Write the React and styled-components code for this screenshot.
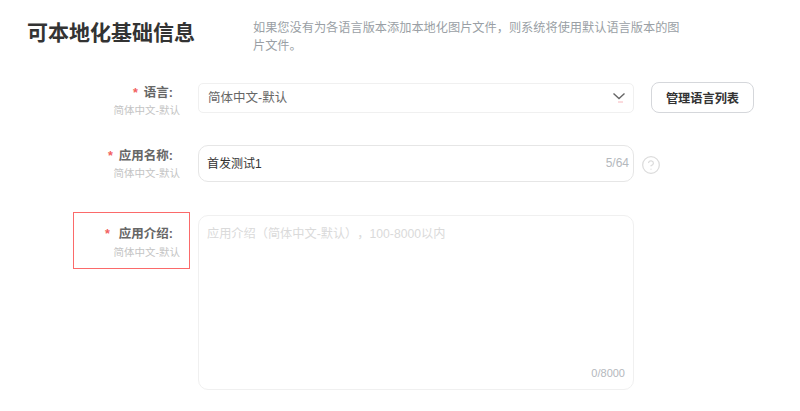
import React from 'react'
import styled, { createGlobalStyle } from 'styled-components'
import { CircleHelp } from 'lucide-react'

const GlobalStyle = createGlobalStyle`
    html, body {
        margin: 0;
        padding: 0;
        background: #fff;
        overflow: hidden;
    }
    * {
        box-sizing: border-box;
    }
    body, input, textarea, button {
        font-family: "Liberation Sans", "Noto Sans CJK SC", sans-serif;
    }
`

const Page = styled.div`
    width: 800px;
    height: 411px;
    padding: 18px 0 0 27px;
    overflow: hidden;
`

const Header = styled.header`
    display: flex;
    align-items: flex-start;
    height: 64px;
`

const Title = styled.h1`
    width: 226px;
    margin: 0;
    font-size: 21px;
    line-height: 30px;
    font-weight: 700;
    color: #333;
`

const Description = styled.p`
    width: 432px;
    margin: 1px 0 0;
    font-size: 12.2px;
    line-height: 18px;
    color: #9a9fa5;
`

const Form = styled.form`
    display: flex;
    flex-direction: column;
    margin-left: 46px;
`

const Row = styled.div`
    display: flex;
    align-items: flex-start;
    margin-bottom: ${(p) => p.$gap || 0}px;
`

const LabelCell = styled.div`
    width: 117px;
    height: 40px;
    margin-right: 8px;
    padding: 1px 9px 0 0;
    border: 1px solid transparent;
    text-align: right;
`

const FlaggedLabelCell = styled(LabelCell)`
    height: 57px;
    padding-top: 12px;
    border-color: rgb(251, 106, 106);
`

const LabelText = styled.div`
    padding-right: 7px;
    font-size: 12.5px;
    line-height: 18px;
    font-weight: 700;
    color: #666;
`

const Star = styled.span`
    margin-right: ${(p) => p.$gap || 6}px;
    color: #f25f5f;
`

const LabelHint = styled.div`
    font-size: 10.5px;
    line-height: 16px;
    color: #c4c4c4;
`

const FlaggedHint = styled(LabelHint)`
    margin-top: 1px;
`

const FieldWrap = styled.div`
    position: relative;
    width: 436px;
    margin-top: ${(p) => p.$top || 0}px;
`

const SelectBox = styled.div`
    display: flex;
    align-items: center;
    justify-content: space-between;
    height: 30px;
    padding: 0 7px 3px 9px;
    border: 1px solid #f0f0f0;
    border-radius: 5px;
    font-size: 12.5px;
    color: #666;
`

const TextInput = styled.input`
    display: block;
    width: 100%;
    height: 37px;
    padding: 0 50px 2px 8px;
    border: 1px solid #e6e6e6;
    border-radius: 10px;
    outline: none;
    font-size: 12px;
    color: #333;
`

const TextArea = styled.textarea`
    display: block;
    width: 100%;
    height: 175px;
    padding: 9px 8px;
    border: 1px solid #f0f0f0;
    border-radius: 10px;
    outline: none;
    resize: none;
    font-size: 12.2px;
    line-height: 18px;
    text-spacing-trim: space-all;
    &::placeholder {
        color: #dadada;
    }
`

const Counter = styled.span`
    position: absolute;
    right: ${(p) => p.$right}px;
    bottom: ${(p) => p.$bottom}px;
    font-size: ${(p) => p.$size}px;
    line-height: 14px;
    color: #b4b8bd;
`

const ManageButton = styled.button`
    width: 103px;
    height: 31px;
    margin: 0 0 0 17px;
    padding: 0;
    border: 1px solid #d5d7db;
    border-radius: 8px;
    background: #fff;
    font-size: 12.2px;
    font-weight: 700;
    color: #333;
`

const HelpIcon = styled(CircleHelp)`
    margin: 10px 0 0 7px;
    color: #dcdcdc;
`

function Chevron() {
    return (
        <svg width="14" height="12" viewBox="0 0 14 12" fill="none">
            <path d="M1.5 2.5 L7 7.5 L12.5 2.5" stroke="#666" strokeWidth="1.4" />
            <path d="M6 11 H11" stroke="#f7b6bc" strokeWidth="1" />
        </svg>
    )
}

function FieldLabel({ text }) {
    return (
        <LabelCell>
            <LabelText><Star>*</Star>{text}:</LabelText>
            <LabelHint>简体中文-默认</LabelHint>
        </LabelCell>
    )
}

export default function App() {
    return (
        <Page>
            <GlobalStyle />
            <Header>
                <Title>可本地化基础信息</Title>
                <Description>
                    如果您没有为各语言版本添加本地化图片文件，则系统将使用默认语言版本的图片文件。
                </Description>
            </Header>
            <Form>
                <Row $gap={23}>
                    <FieldLabel text="语言" />
                    <FieldWrap $top={1}>
                        <SelectBox>
                            简体中文-默认
                            <Chevron />
                        </SelectBox>
                    </FieldWrap>
                    <ManageButton type="button">管理语言列表</ManageButton>
                </Row>
                <Row $gap={27}>
                    <FieldLabel text="应用名称" />
                    <FieldWrap>
                        <TextInput readOnly value="首发测试1" />
                        <Counter $right={5} $bottom={12} $size={12}>5/64</Counter>
                    </FieldWrap>
                    <HelpIcon size={20} strokeWidth={1.5} />
                </Row>
                <Row>
                    <FlaggedLabelCell>
                        <LabelText><Star $gap={9}>*</Star>应用介绍:</LabelText>
                        <FlaggedHint>简体中文-默认</FlaggedHint>
                    </FlaggedLabelCell>
                    <FieldWrap $top={3}>
                        <TextArea readOnly placeholder="应用介绍（简体中文-默认），100-8000以内" />
                        <Counter $right={9} $bottom={10} $size={11}>0/8000</Counter>
                    </FieldWrap>
                </Row>
            </Form>
        </Page>
    )
}
